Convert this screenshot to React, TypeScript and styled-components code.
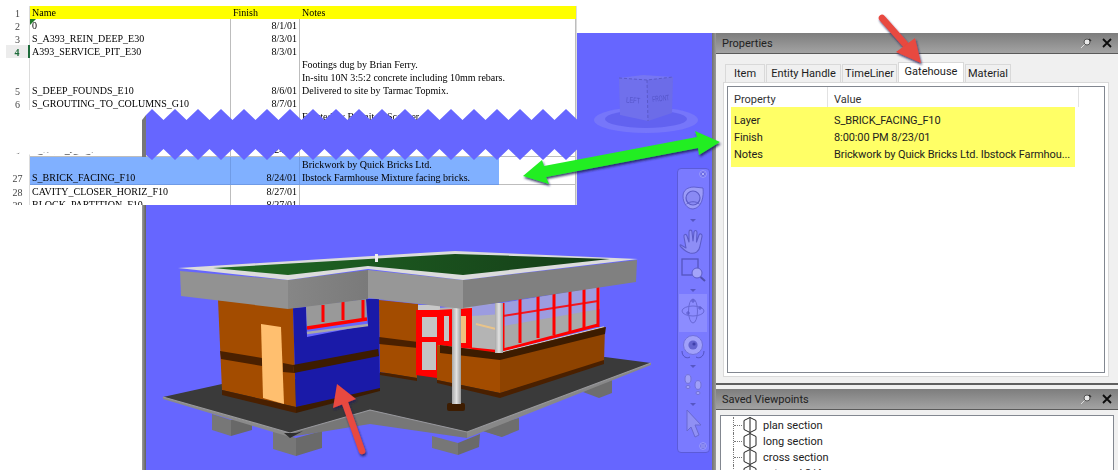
import React from "react";
import styled, { createGlobalStyle } from "styled-components";

const Global = createGlobalStyle`
  html, body { margin: 0; padding: 0; background: #fff; }
  #root { width: 1118px; height: 470px; overflow: hidden; }
`;

const Page = styled.div`
  position: relative;
  width: 1118px;
  height: 470px;
  overflow: hidden;
  background: #fff;
  display: flex;
  flex-direction: column;
`;
const TopStrip = styled.div`height: 33px; flex: none;`;
const Workspace = styled.div`flex: 1; display: flex; min-height: 0;`;
const LeftMargin = styled.div`width: 142px; flex: none;`;
const Gutter = styled.div`
  width: 4px; flex: none;
  background: linear-gradient(90deg, #9a9a9a, #5f5f5f);
`;
const Viewport = styled.div`
  position: relative;
  width: 566px;
  flex: none;
  background: #6666ff;
  overflow: hidden;
`;
const Scene = styled.svg`
  position: absolute; inset: 0; width: 566px; height: 437px;
  filter: blur(0.4px);
`;
const Splitter = styled.div`
  width: 4px; flex: none;
  background: linear-gradient(90deg, #6f6f6f, #9a9a9a);
`;
const Docks = styled.div`
  flex: 1; display: flex; flex-direction: column;
  background: #f0f0f0;
  font-family: "Roboto", "Liberation Sans", sans-serif;
  font-size: 11px;
  color: #1d1d1d;
`;
const Dock = styled.section<{ $h?: number }>`
  display: flex; flex-direction: column;
  ${(p) => (p.$h ? `height: ${p.$h}px; flex: none;` : "flex: 1; min-height: 0;")}
`;
const DockGap = styled.div`height: 4px; flex: none;`;
const TitleBar = styled.header`
  height: 21px; flex: none;
  display: flex; align-items: center;
  padding: 0 5px 0 6px;
  box-sizing: border-box;
  background: linear-gradient(180deg, #7d7d7d, #a3a3a3);
  border-bottom: 1px solid #5a5a5a;
`;
const TitleText = styled.span`flex: 1; color: #222;`;
const TitleIcons = styled.div`display: flex; align-items: center; gap: 9px;`;
const PropsBody = styled.div`
  flex: 1; display: flex; flex-direction: column;
  padding: 8px 8px 6px 7px;
  border-bottom: 2px solid #5f5f5f;
  min-height: 0;
`;
const Tabs = styled.div`
  display: flex; gap: 1px; padding-left: 2px; height: 20px; align-items: flex-end;
`;
const Tab = styled.div<{ $w: number; $active?: boolean }>`
  width: ${(p) => p.$w}px;
  height: ${(p) => (p.$active ? 20 : 18)}px;
  box-sizing: border-box;
  display: flex; align-items: center; justify-content: center;
  background: ${(p) => (p.$active ? "#fff" : "#f0f0f0")};
  border: 1px solid #d9d9d9;
  border-bottom: none;
  padding-bottom: ${(p) => (p.$active ? 3 : 0)}px;
`;
const TabPane = styled.div`
  flex: 1; background: #fff; border: 1px solid #d9d9d9;
  padding: 3px; display: flex; min-height: 0; margin-right: 1px;
`;
const ListBox = styled.div`
  flex: 1; border: 1px solid #828790; background: #fff;
`;
const ListHeader = styled.div`
  display: grid; grid-template-columns: 100px 251px 1fr;
  height: 20px; align-items: center; color: #333;
`;
const HeaderCell = styled.div`
  height: 100%; display: flex; align-items: center; padding: 4px 0 0 6px;
  box-sizing: border-box; border-right: 1px solid #e2e2e2;
`;
const HighlightRows = styled.div`
  margin-left: 3px; width: 344px; height: 60px;
  background: #ffff66;
  padding-top: 5px; box-sizing: border-box;
`;
const PropRow = styled.div`
  display: grid; grid-template-columns: 100px 1fr; height: 17px; align-items: center;
  padding-left: 3px;
  white-space: nowrap;
  letter-spacing: -0.1px;
`;
const TreeBox = styled.div`
  margin: 5px 4px 0; flex: 1; background: #fff; border: 1px solid #828790; border-bottom: none;
  padding-top: 1px;
  overflow: hidden; min-height: 0;
`;
const TreeRow = styled.div`
  height: 16px; display: flex; align-items: center; margin-left: 12px;
  border-left: 1px dotted #777;
  white-space: nowrap;
`;
const TreeLink = styled.span`
  width: 8px; height: 0; border-top: 1px dotted #777; flex: none;
`;
const TreeLabel = styled.span`margin-left: 5px;`;

/* Spreadsheet overlay */
const Sheet = styled.div`
  position: absolute; left: 0; top: 6px; width: 577px; height: 199px;
  overflow: hidden; background: #fff;
  font-family: "Liberation Serif", serif;
  font-size: 10px;
  color: #000;
  filter: blur(0.3px);
`;
const SheetRow = styled.div<{ $h?: number }>`
  display: grid;
  grid-template-columns: 30px 201px 69px 276px;
  height: ${(p) => p.$h ?? 13}px;
  width: 576px;
  border-right: 1px solid #dcdcdc;
`;
const RowNum = styled.div<{ $active?: boolean }>`
  display: flex; align-items: flex-end; justify-content: center;
  line-height: 12px;
  margin-left: 6px;
  color: ${(p) => (p.$active ? "#1d6b3a" : "#444")};
  font-weight: ${(p) => (p.$active ? 700 : 400)};
  background: ${(p) => (p.$active ? "#ececec" : "#fff")};
  border-right: ${(p) => (p.$active ? "2px solid #1d6b3a" : "1px solid #dcdcdc")};
  box-sizing: border-box;
`;
const Cell = styled.div<{ $right?: boolean; $head?: boolean; $sel?: boolean }>`
  box-sizing: border-box;
  padding: 0 2px;
  line-height: 13px;
  display: flex;
  flex-direction: column;
  justify-content: flex-end;
  align-items: ${(p) => (p.$right ? "flex-end" : "flex-start")};
  white-space: nowrap;
  position: relative;
  background: ${(p) => (p.$head ? "#ffff00" : p.$sel ? "#80b0ff" : "#fff")};
  border-right: 1px solid ${(p) => (p.$head ? "#ffff00" : p.$sel ? "#6f9be6" : "#bdbdbd")};
  border-bottom: 1px solid ${(p) => (p.$head ? "#ffff00" : p.$sel ? "#6f9be6" : "#bdbdbd")};
`;
const NotesSel = styled.div`
  position: absolute; left: 0; top: 0; bottom: -1px; width: 199px;
  background: #80b0ff; border-bottom: 1px solid #6f9be6;
  padding: 0 2px; box-sizing: border-box;
  display: flex; flex-direction: column; justify-content: flex-end;
`;
const CommentMark = styled.i`
  position: absolute; left: 0; top: 0; width: 0; height: 0;
  border-top: 6px solid #1f7a2a; border-right: 6px solid transparent;
`;
const Tear = styled.svg`
  position: absolute; left: 0; top: 103px; width: 577px; height: 56px;
`;
const Overlay = styled.svg`
  position: absolute; left: 0; top: 0; width: 1118px; height: 470px; pointer-events: none;
`;

/* Navigation bar */
const NavBar = styled.div`
  position: absolute; left: 531px; top: 135px; width: 33px; height: 285px;
  box-sizing: border-box;
  background: #7a7aff;
  border: 1px solid #5b5bd8;
  border-radius: 4px;
  filter: blur(0.3px);
`;
const NavSvg = styled.svg`width: 31px; height: 283px; display: block;`;

type Row = { n: string; name: string; fin: string; notes?: string[]; h?: number; active?: boolean; sel?: boolean; mark?: boolean };
const rows: Row[] = [
  { n: "2", name: "0", fin: "8/1/01", mark: true },
  { n: "3", name: "S_A393_REIN_DEEP_E30", fin: "8/3/01" },
  { n: "4", name: "A393_SERVICE_PIT_E30", fin: "8/3/01", active: true },
  { n: "5", name: "S_DEEP_FOUNDS_E10", fin: "8/6/01", h: 39, notes: ["Footings dug by Brian Ferry.", "In-situ 10N 3:5:2 concrete including 10mm rebars.", "Delivered to site by Tarmac Topmix."] },
  { n: "6", name: "S_GROUTING_TO_COLUMNS_G10", fin: "8/7/01" },
  { n: "", name: "", fin: "", notes: ["Erected by Bennit & Scanner."], h: 13 },
  { n: "", name: "", fin: "", h: 20 },
  { n: "3", name: "S_A1_2_J_C_J", fin: "8/24/01", h: 14 },
  { n: "27", name: "S_BRICK_FACING_F10", fin: "8/24/01", h: 28, sel: true, notes: ["Brickwork by Quick Bricks Ltd.", "Ibstock Farmhouse Mixture facing bricks."] },
  { n: "28", name: "CAVITY_CLOSER_HORIZ_F10", fin: "8/27/01" },
  { n: "29", name: "BLOCK_PARTITION_F10", fin: "8/27/01" },
];

type Poly = [string, string];

const slab: Poly[] = [
  ["212,414 231,420 231,436 212,430", "#777"],
  ["231,420 252,414 252,430 231,436", "#686868"],
  ["273,431 296,438 296,456 273,449", "#777"],
  ["296,438 322,431 322,448 296,456", "#6a6a6a"],
  ["432,436 458,443 458,455 432,448", "#777"],
  ["458,443 480,434 479,447 458,455", "#6a6a6a"],
  ["483,428 502,434 502,437 483,431", "#777"],
  ["483,431 502,437 519,430 519,418 490,425", "#6e6e6e"],
  ["583,392 599,398 612,393 612,380 590,388", "#6e6e6e"],
  ["163,397 290,433 290,437 163,399", "#8a8a8a"],
  ["290,433 370,410 370,424 290,437", "#777"],
  ["370,410 467,432 467,438 370,424", "#777"],
  ["467,432 651,363 651,365 467,438", "#888"],
  ["163,397 222,384 605,357 651,363 467,432 370,410 290,433", "#3a3a3a"],
];

const walls: Poly[] = [
  ["379,300 418,304 417,378 380,372", "#a34c00"],
  ["379,337 418,342 418,348 379,344", "#4a2000"],
  ["380,372 417,378 417,381 380,375", "#4a2000"],
  ["218,300 293,308 296,407 222,390", "#a34c00"],
  ["220,351 262,358 262,366 221,359", "#4a2000"],
  ["283,363 293,365 294,373 283,372", "#4a2000"],
  ["222,390 296,407 296,413 222,395", "#4a2000"],
  ["261,324 281,327 284,404 263,398", "#ffbf6f"],
  ["293,308 306,307 307,337 368,325 366,299 379,299 380,390 296,407", "#1a1aa8"],
  ["293,365 378,349 379,356 294,373", "#3d1c00"],
  ["296,407 380,388 380,391 296,413", "#3d1c00"],
  ["306,306 366,299 367,321 307,328", "#999999"],
];

const glass: Poly[] = [
  ["438,308 503,303 503,352 438,346", "#b4b4b4"],
  ["503,303 600,287 598,326 503,351", "#a8a8a8"],
  ["503,303 600,287 600,309 503,326", "#9c9ce0"],
  ["472,306 503,303 503,314 472,316", "#9c9ce0"],
];

const mull = [
  [503, 303, 350], [520, 299, 343], [538, 296, 338], [554, 294, 335], [570, 291, 332], [584, 289, 329], [598, 287, 327],
];

function zig() {
  const top: string[] = [];
  const bot: string[] = [];
  for (let k = 0; k < 19; k++) {
    top.push(`${152 + k * 23},0`, `${163.5 + k * 23},11`);
    bot.push(`${152 + k * 23},51`, `${163.5 + k * 23},40`);
  }
  return [`146,6`, ...top, `577,6`, `577,40`, ...bot.reverse(), `146,46`].join(" ");
}

function Pin() {
  return (
    <svg width="12" height="12" viewBox="0 0 12 12">
      <path d="M1 11 L5 7" stroke="#ddd" strokeWidth="1" />
      <circle cx="7" cy="5" r="3" fill="#e8e8e8" stroke="#555" />
      <path d="M9 2 L11 4" stroke="#333" strokeWidth="1.4" />
    </svg>
  );
}
function Close() {
  return (
    <svg width="12" height="12" viewBox="0 0 12 12">
      <path d="M2 2 L10 10 M10 2 L2 10" stroke="#0c0c0c" strokeWidth="1.8" />
    </svg>
  );
}
function Hex() {
  return (
    <svg width="16" height="16" viewBox="0 0 16 16" style={{ flex: "none" }}>
      <path d="M8 0.5 L14 3.5 V12.5 L8 15.5 L2 12.5 V3.5 Z M8 0.5 V15.5" fill="#fff" stroke="#222" strokeWidth="1" />
    </svg>
  );
}

export default function App() {
  return (
    <Page>
      <Global />
      <TopStrip />
      <Workspace>
        <LeftMargin />
        <Gutter />
        <Viewport>
          <Scene viewBox="146 33 566 437">
            <defs>
              <linearGradient id="post" x1="0" x2="1" y1="0" y2="0">
                <stop offset="0" stopColor="#a8a8a8" />
                <stop offset="0.5" stopColor="#e2e2e2" />
                <stop offset="1" stopColor="#9a9a9a" />
              </linearGradient>
              <linearGradient id="fasciaB" x1="0" x2="1" y1="0" y2="0">
                <stop offset="0" stopColor="#868686" />
                <stop offset="1" stopColor="#7a7a7a" />
              </linearGradient>
              <linearGradient id="green" gradientUnits="userSpaceOnUse" x1="213" y1="0" x2="610" y2="0">
                <stop offset="0" stopColor="#206a24" />
                <stop offset="1" stopColor="#153c18" />
              </linearGradient>
            </defs>
            {/* view cube */}
            <ellipse cx="646" cy="120" rx="52" ry="13" fill="#7676fa" />
            <ellipse cx="646" cy="119" rx="41" ry="9" fill="#6262f0" />
            <polygon points="619,78 647,80 648,121 620,115" fill="#7070ec" />
            <polygon points="647,80 673,77 672,113 648,121" fill="#6c6ce8" />
            <polygon points="619,78 643,75 673,77 647,80" fill="#7676f2" />
            <path d="M647 80 L648 121 M619 78 L647 80 L673 77" stroke="#5a5ac8" strokeDasharray="3 2" fill="none" />
            <text x="633" y="103" fontSize="8" fill="#5454c8" fontFamily="Liberation Sans, sans-serif" textAnchor="middle" transform="rotate(4 633 103)" textLength="14" lengthAdjust="spacingAndGlyphs">LEFT</text>
            <text x="661" y="101" fontSize="8" fill="#5454c8" fontFamily="Liberation Sans, sans-serif" textAnchor="middle" transform="rotate(-6 661 101)" textLength="17" lengthAdjust="spacingAndGlyphs">FRONT</text>

            {/* slab and footings */}
            {slab.map(([p, f], i) => <polygon key={i} points={p} fill={f} />)}
            <path d="M163 397 L290 433 L370 410 L467 432 L651 363" stroke="#9a9a9a" strokeWidth="1.2" fill="none" />
            <polygon points="284,433 296,433 303,431 290,438" fill="#2f2f2f" />

            {/* walls */}
            {walls.map(([p, f], i) => <polygon key={i} points={p} fill={f} />)}
            <path d="M323 305 V322 M343 302 V320 M363 300 V318" stroke="#ff0000" strokeWidth="3" />
            <path d="M307 328 L367 319" stroke="#ff0000" strokeWidth="3.5" />
            <path d="M307 333 L368 325" stroke="#a8a8a8" strokeWidth="2.5" />

            {/* glazing */}
            {glass.map(([p, f], i) => <polygon key={i} points={p} fill={f} />)}
            <polygon points="418,305 440,305 440,311 418,311" fill="#c8c8c8" />
            <polygon points="416,310 440,310 437,378 416,375" fill="#ff0000" />
            <polygon points="422,317 437,317 437,337 422,337" fill="#c4c4c4" />
            <polygon points="422,342 436,342 436,370 422,370" fill="#c4c4c4" />
            <polygon points="438,310 472,308 472,349 438,345" fill="#ff0000" />
            <polygon points="444,316 449,316 449,341 444,341" fill="#c4c4c4" />
            <polygon points="461,316 466,316 466,343 461,343" fill="#f0c080" />
            <path d="M472 349 L503 352" stroke="#ff0000" strokeWidth="3" />
            <path d="M476 324 L500 330" stroke="#e9c48a" strokeWidth="2" />
            {mull.map(([x, a, b]) => <path key={x} d={`M${x} ${a} V${b}`} stroke="#ff0000" strokeWidth="3" />)}
            <path d="M503 316 L598 301" stroke="#ff0000" strokeWidth="2" opacity="0.85" />
            <path d="M503 350 L598 325" stroke="#ff0000" strokeWidth="3" />
            <path d="M503 352 L604 327" stroke="#cfcfcf" strokeWidth="1.5" />

            {/* lower walls, front */}
            <polygon points="437,345 500,353 500,393 437,380" fill="#a34c00" />
            <polygon points="440,345 500,353 500,360 440,353" fill="#3d1c00" />
            <polygon points="437,380 500,393 500,398 437,383" fill="#4a2000" />
            <polygon points="500,353 605,327 604,362 500,393" fill="#8e4300" />
            <polygon points="500,353 606,327 605,334 500,360" fill="#3d1c00" />
            <polygon points="500,393 604,360 604,364 500,398" fill="#4a2000" />

            {/* columns */}
            <rect x="447" y="403" width="18" height="8" rx="2" fill="#3d1c00" />
            <rect x="452" y="308" width="9" height="96" fill="url(#post)" />
            <rect x="495" y="303" width="8" height="50" fill="url(#post)" />

            {/* roof */}
            <polygon points="180,271 288,280 288,309 181,296" fill="#929292" />
            <polygon points="288,280 368,270 368,299 288,309" fill="url(#fasciaB)" />
            <polygon points="368,270 463,280 463,309 368,298" fill="#979797" />
            <polygon points="463,280 637,260 636,282 463,308" fill="#808080" />
            <polygon points="178,268 420,253 455,251 638,259 463,280 368,269 288,280" fill="#dcdcdc" />
            <polygon points="213,268 420,256 455,254 610,259 463,275 368,266 288,275" fill="url(#green)" />
            <rect x="375" y="254" width="3" height="8" fill="#eee" />
          </Scene>

          <NavBar>
            <NavSvg viewBox="0 0 31 283">
              <circle cx="25" cy="5" r="3.4" fill="#6a6ae6" stroke="#9d9dff" />
              <path d="M23.6 3.6 L26.4 6.4 M26.4 3.6 L23.6 6.4" stroke="#c4c4ff" strokeWidth="0.8" />
              {/* steering wheel */}
              <path d="M5 27 C5 21 10 18 16 18 L25 19 C26 27 24 39 15 40 C9 40 5 34 5 27 Z" fill="#9c9cf8" stroke="#6060d0" strokeWidth="1" />
              <circle cx="15" cy="29" r="7" fill="#8a8af4" stroke="#5c5cc8" strokeWidth="1.2" />
              <path d="M8.5 35 C12 32 18 32 21.5 35" fill="none" stroke="#5c5cc8" strokeWidth="1" />
              {[50, 120, 158, 196, 234].map((y) => <polygon key={y} points={`12,${y} 18,${y} 15,${y + 3}`} fill="#5656c4" />)}
              {/* hand */}
              <path d="M3 76 L8 79 L6 68 C5.5 65 8 64.5 9 67 L11 73 L11 63 C11 60.5 14 60.5 14 63 L15 72 L16 63 C16.5 61 19 61 19 63.5 L18.5 73 L21 66 C22 64 24.5 65 24 67.5 L22 77 C21 83 17 85 12 84 C8 83 6 81 3 78 C1.5 76.5 2 75.5 3 76 Z" fill="#8e8ef6" stroke="#5c5cc8" strokeWidth="1.1" strokeLinejoin="round" />
              {/* zoom window */}
              <rect x="4" y="90" width="16" height="16" fill="#7a7aff" stroke="#5555bf" strokeWidth="1.3" />
              <circle cx="19" cy="104" r="5" fill="#a4a4fa" stroke="#5c5cc8" />
              <path d="M22.5 108 L27 112" stroke="#5050b0" strokeWidth="2" />
              {/* orbit */}
              <rect x="1" y="125" width="28" height="38" fill="#8c8cff" />
              <ellipse cx="15" cy="142" rx="11" ry="5" fill="none" stroke="#6868d6" strokeWidth="1" />
              <ellipse cx="15" cy="142" rx="4.5" ry="12" fill="none" stroke="#6868d6" strokeWidth="1" />
              <path d="M13 132 H17 M15 130 V134 M20 139 H24 M22 137 V141 M8 144 H12 M10 142 V146" stroke="#5858c8" strokeWidth="0.9" />
              {/* look */}
              <circle cx="15" cy="176" r="9.5" fill="#a0a0fa" stroke="#7070dc" />
              <circle cx="15" cy="176" r="4.6" fill="#6464cf" />
              <circle cx="16" cy="175" r="1.6" fill="#3e3eaa" />
              <path d="M4 182 C4 188 9 190 12 188 M26 182 C26 188 21 190 18 188" fill="none" stroke="#5252c0" strokeWidth="1" />
              {/* feet */}
              <ellipse cx="10" cy="210" rx="3" ry="4.4" fill="#a0a0f8" stroke="#7272d8" />
              <ellipse cx="10" cy="218" rx="2" ry="1.6" fill="#a0a0f8" stroke="#7272d8" />
              <ellipse cx="20" cy="216" rx="3" ry="4.4" fill="#a0a0f8" stroke="#7272d8" />
              <ellipse cx="20" cy="224" rx="2" ry="1.6" fill="#a0a0f8" stroke="#7272d8" />
              {/* pointer */}
              <path d="M9 241 L23 256 L17 256 L21 266 L17 268 L13 258 L9 262 Z" fill="#9090f4" stroke="#6868d0" strokeWidth="1" strokeLinejoin="round" />
              <circle cx="25" cy="277" r="3.4" fill="#6a6ae6" stroke="#9d9dff" />
              <path d="M23 276 H27 M23 278 H27" stroke="#c4c4ff" strokeWidth="0.7" />
            </NavSvg>
          </NavBar>
        </Viewport>
        <Splitter />
        <Docks>
          <Dock $h={352}>
            <TitleBar>
              <TitleText>Properties</TitleText>
              <TitleIcons><Pin /><Close /></TitleIcons>
            </TitleBar>
            <PropsBody>
              <Tabs>
                <Tab $w={40}>Item</Tab>
                <Tab $w={75}>Entity Handle</Tab>
                <Tab $w={55}>TimeLiner</Tab>
                <Tab $w={66} $active>Gatehouse</Tab>
                <Tab $w={46}>Material</Tab>
              </Tabs>
              <TabPane>
                <ListBox>
                  <ListHeader>
                    <HeaderCell>Property</HeaderCell>
                    <HeaderCell>Value</HeaderCell>
                    <div />
                  </ListHeader>
                  <HighlightRows>
                    <PropRow><span>Layer</span><span>S_BRICK_FACING_F10</span></PropRow>
                    <PropRow><span>Finish</span><span>8:00:00 PM 8/23/01</span></PropRow>
                    <PropRow><span>Notes</span><span>Brickwork by Quick Bricks Ltd. Ibstock Farmhou...</span></PropRow>
                  </HighlightRows>
                </ListBox>
              </TabPane>
            </PropsBody>
          </Dock>
          <Dock>
            <DockGap />
            <TitleBar>
              <TitleText>Saved Viewpoints</TitleText>
              <TitleIcons><Pin /><Close /></TitleIcons>
            </TitleBar>
            <TreeBox>
              {["plan section", "long section", "cross section", "external 3/4"].map((t) => (
                <TreeRow key={t}><TreeLink /><Hex /><TreeLabel>{t}</TreeLabel></TreeRow>
              ))}
            </TreeBox>
          </Dock>
        </Docks>
      </Workspace>

      <Sheet>
        <SheetRow>
          <RowNum>1</RowNum>
          <Cell $head>Name</Cell>
          <Cell $head>Finish</Cell>
          <Cell $head>Notes</Cell>
        </SheetRow>
        {rows.map((r, i) => (
          <SheetRow key={i} $h={r.h}>
            <RowNum $active={r.active}>{r.n}</RowNum>
            <Cell $sel={r.sel}>{r.mark && <CommentMark />}{r.name}</Cell>
            <Cell $right $sel={r.sel}>{r.fin}</Cell>
            <Cell>
              {r.sel ? (
                <NotesSel>{r.notes?.map((t) => <span key={t}>{t}</span>)}</NotesSel>
              ) : (
                r.notes?.map((t) => <span key={t}>{t}</span>)
              )}
            </Cell>
          </SheetRow>
        ))}
        <Tear viewBox="0 0 577 56">
          <polygon points="0,1 142,1 142,44 129,47 118,43 106,47 94,43 82,47 70,43 58,47 46,43 34,47 22,43 10,47 0,43" fill="#fff" />
          <polygon points="146,6 142,11 142,48 146,48" fill="#777" />
          <polygon fill="#6666ff" points={zig()} />
        </Tear>
      </Sheet>
      <Overlay viewBox="0 0 1118 470">
        <defs>
          <filter id="sh" x="-20%" y="-20%" width="140%" height="140%">
            <feDropShadow dx="1" dy="2" stdDeviation="1" floodColor="#1a1a55" floodOpacity="0.85" />
          </filter>
        </defs>
        <g filter="url(#sh)">
          <polygon points="720,142 695,131 697,137 544,166 542,160 523,176 549,184 546,177 698,148 699,155" fill="#22ee22" />
        </g>
        <g filter="url(#sh)">
          <path d="M882 18 L905 44" stroke="#e8483f" strokeWidth="6.5" strokeLinecap="round" />
          <polygon points="921,63 896,52 915,38" fill="#e8483f" />
        </g>
        <g filter="url(#sh)">
          <path d="M362 451 L345 403" stroke="#e8483f" strokeWidth="6.5" strokeLinecap="round" />
          <polygon points="337,384 333,408 356,399" fill="#e8483f" />
        </g>
      </Overlay>
    </Page>
  );
}
